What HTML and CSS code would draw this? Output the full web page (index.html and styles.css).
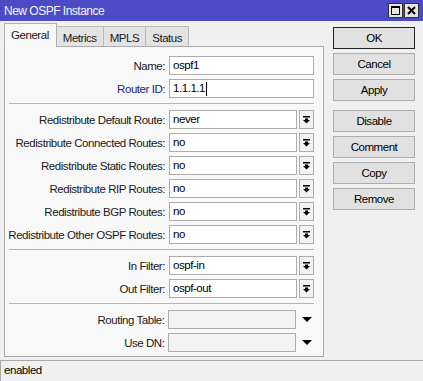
FILE: index.html
```html
<!DOCTYPE html>
<html>
<head>
<meta charset="utf-8">
<title>New OSPF Instance</title>
<link rel="stylesheet" href="styles.css">
</head>
<body>
<div class="window">
  <div class="titlebar">
    <span class="title">New OSPF Instance</span>
    <div class="title-btns">
      <span class="tbtn"><svg width="13" height="13" viewBox="0 0 13 13"><rect x="2.5" y="2.5" width="8" height="8" fill="none" stroke="#000" stroke-width="1"/><rect x="2" y="2" width="9" height="2" fill="#000"/></svg></span>
      <span class="tbtn"><svg width="13" height="13" viewBox="0 0 13 13"><path d="M3 3 L10 10 M10 3 L3 10" stroke="#000" stroke-width="2"/></svg></span>
    </div>
  </div>
  <div class="main">
    <div class="left">
      <div class="tabs">
        <span class="tab active">General</span>
        <span class="tab">Metrics</span>
        <span class="tab">MPLS</span>
        <span class="tab">Status</span>
      </div>
      <div class="panel">
        <div class="group">
          <div class="row"><span class="label">Name:</span><span class="input wide">ospf1</span></div>
          <div class="row"><span class="label blue">Router ID:</span><span class="input wide">1.1.1.1<span class="caret"></span></span></div>
        </div>
        <div class="sep"></div>
        <div class="group">
          <div class="row"><span class="label">Redistribute Default Route:</span><span class="input">never</span><span class="dd"><svg width="7" height="8" viewBox="0 0 7 8"><rect x="0" y="0" width="7" height="1.5" fill="#000"/><rect x="2" y="2.5" width="3" height="1.5" fill="#000"/><path d="M0 4 L7 4 L3.5 7.5 Z" fill="#000"/></svg></span></div>
          <div class="row"><span class="label">Redistribute Connected Routes:</span><span class="input">no</span><span class="dd"><svg width="7" height="8" viewBox="0 0 7 8"><rect x="0" y="0" width="7" height="1.5" fill="#000"/><rect x="2" y="2.5" width="3" height="1.5" fill="#000"/><path d="M0 4 L7 4 L3.5 7.5 Z" fill="#000"/></svg></span></div>
          <div class="row"><span class="label">Redistribute Static Routes:</span><span class="input">no</span><span class="dd"><svg width="7" height="8" viewBox="0 0 7 8"><rect x="0" y="0" width="7" height="1.5" fill="#000"/><rect x="2" y="2.5" width="3" height="1.5" fill="#000"/><path d="M0 4 L7 4 L3.5 7.5 Z" fill="#000"/></svg></span></div>
          <div class="row"><span class="label">Redistribute RIP Routes:</span><span class="input">no</span><span class="dd"><svg width="7" height="8" viewBox="0 0 7 8"><rect x="0" y="0" width="7" height="1.5" fill="#000"/><rect x="2" y="2.5" width="3" height="1.5" fill="#000"/><path d="M0 4 L7 4 L3.5 7.5 Z" fill="#000"/></svg></span></div>
          <div class="row"><span class="label">Redistribute BGP Routes:</span><span class="input">no</span><span class="dd"><svg width="7" height="8" viewBox="0 0 7 8"><rect x="0" y="0" width="7" height="1.5" fill="#000"/><rect x="2" y="2.5" width="3" height="1.5" fill="#000"/><path d="M0 4 L7 4 L3.5 7.5 Z" fill="#000"/></svg></span></div>
          <div class="row"><span class="label">Redistribute Other OSPF Routes:</span><span class="input">no</span><span class="dd"><svg width="7" height="8" viewBox="0 0 7 8"><rect x="0" y="0" width="7" height="1.5" fill="#000"/><rect x="2" y="2.5" width="3" height="1.5" fill="#000"/><path d="M0 4 L7 4 L3.5 7.5 Z" fill="#000"/></svg></span></div>
        </div>
        <div class="sep"></div>
        <div class="group">
          <div class="row"><span class="label">In Filter:</span><span class="input">ospf-in</span><span class="dd"><svg width="7" height="8" viewBox="0 0 7 8"><rect x="0" y="0" width="7" height="1.5" fill="#000"/><rect x="2" y="2.5" width="3" height="1.5" fill="#000"/><path d="M0 4 L7 4 L3.5 7.5 Z" fill="#000"/></svg></span></div>
          <div class="row"><span class="label">Out Filter:</span><span class="input">ospf-out</span><span class="dd"><svg width="7" height="8" viewBox="0 0 7 8"><rect x="0" y="0" width="7" height="1.5" fill="#000"/><rect x="2" y="2.5" width="3" height="1.5" fill="#000"/><path d="M0 4 L7 4 L3.5 7.5 Z" fill="#000"/></svg></span></div>
        </div>
        <div class="sep"></div>
        <div class="group">
          <div class="row"><span class="label">Routing Table:</span><span class="input disabled"></span><span class="tri"><svg width="10" height="5" viewBox="0 0 10 5"><path d="M0 0 L10 0 L5 5 Z" fill="#000"/></svg></span></div>
          <div class="row"><span class="label">Use DN:</span><span class="input disabled"></span><span class="tri"><svg width="10" height="5" viewBox="0 0 10 5"><path d="M0 0 L10 0 L5 5 Z" fill="#000"/></svg></span></div>
        </div>
      </div>
    </div>
    <div class="buttons">
      <span class="btn default">OK</span>
      <span class="btn">Cancel</span>
      <span class="btn">Apply</span>
      <span class="btn gap">Disable</span>
      <span class="btn">Comment</span>
      <span class="btn">Copy</span>
      <span class="btn">Remove</span>
    </div>
  </div>
  <div class="statusbar">enabled</div>
</div>
</body>
</html>
```
FILE: styles.css
```css
* { box-sizing: border-box; }
html, body { margin: 0; padding: 0; }
body {
  width: 423px;
  height: 381px;
  overflow: hidden;
  background: #f0f0f0;
  font-family: "Liberation Sans", Arial, sans-serif;
  font-size: 11.5px;
  letter-spacing: -0.45px;
  color: #1a1a1a;
}
.window { display: flex; flex-direction: column; height: 381px; }
.titlebar {
  height: 21px;
  background: #4b4bc6;
  color: #fff;
  display: flex;
  align-items: center;
  justify-content: space-between;
  padding: 0 4px 0 4px;
  flex: none;
}
.title { font-size: 12px; letter-spacing: -0.5px; color: #f4f4ff; }
.title-btns { display: flex; gap: 1px; }
.tbtn {
  width: 15px; height: 15px;
  background: #e6e6e6;
  border: 1px solid #333;
  display: flex; align-items: center; justify-content: center;
}
.main { display: flex; height: 339px; flex: none; }
.left { width: 320px; margin-left: 4px; padding-top: 2px; display: flex; flex-direction: column; }
.tabs { display: flex; align-items: flex-start; height: 24px; position: relative; z-index: 1; }
.tab {
  height: 20px;
  margin-top: 3px;
  padding: 3px 6px 0 6px;
  line-height: 16px;
  background: #e3e3e3;
  border: 1px solid #b9b9b9;
  border-bottom: none;
  margin-left: -1px;
}
.tab.active {
  height: 24px;
  margin-top: 0;
  margin-left: 0;
  padding: 0 7px 0 6px;
  line-height: 22px;
  background: #f8f8f8;
  border-color: #b0b0b0;
  position: relative;
  z-index: 2;
}
.panel {
  margin-top: -1px;
  height: 311px;
  border: 1px solid #aaaaaa;
  background: #f8f8f8;
  padding: 9px 9px 0 0;
  display: flex;
  flex-direction: column;
}
.group { display: flex; flex-direction: column; gap: 4px; }
.row { display: flex; align-items: center; height: 19px; }
.label { width: 160px; text-align: right; margin-right: 4px; white-space: nowrap; color: #1a1a1a; }
.label.blue { color: #22228c; }
.input {
  width: 128px;
  height: 19px;
  background: #fff;
  border: 1px solid #acacac;
  padding-left: 3px;
  line-height: 17px;
  color: #000;
  display: flex;
  align-items: center;
}
.input.wide { width: 145px; }
.input.disabled { background: #f3f3f3; }
.caret { display: inline-block; width: 1px; height: 14px; background: #000; margin-left: 1px; }
.dd {
  width: 15px;
  height: 19px;
  margin-left: 2px;
  border: 1px solid #acacac;
  background: #f2f2f2;
  display: flex; align-items: center; justify-content: center;
}
.tri { width: 15px; height: 19px; margin-left: 3px; display: flex; align-items: center; justify-content: center; }
.sep { height: 1px; background: #b4b4b4; margin: 5px 0 6px 4px; }
.buttons { margin-left: 9px; padding-top: 6px; display: flex; flex-direction: column; gap: 4px; }
.btn {
  width: 82px;
  height: 22px;
  background: #e1e1e1;
  border: 1px solid #adadad;
  display: flex; align-items: center; justify-content: center;
  color: #000;
}
.btn.default { border-color: #222; }
.btn.gap { margin-top: 5px; }
.statusbar {
  flex: 1;
  border-top: 1px solid #a8a8a8;
  border-left: 1px solid #a8a8a8;
  padding-left: 3px;
  line-height: 19px;
  color: #000;
}
```
